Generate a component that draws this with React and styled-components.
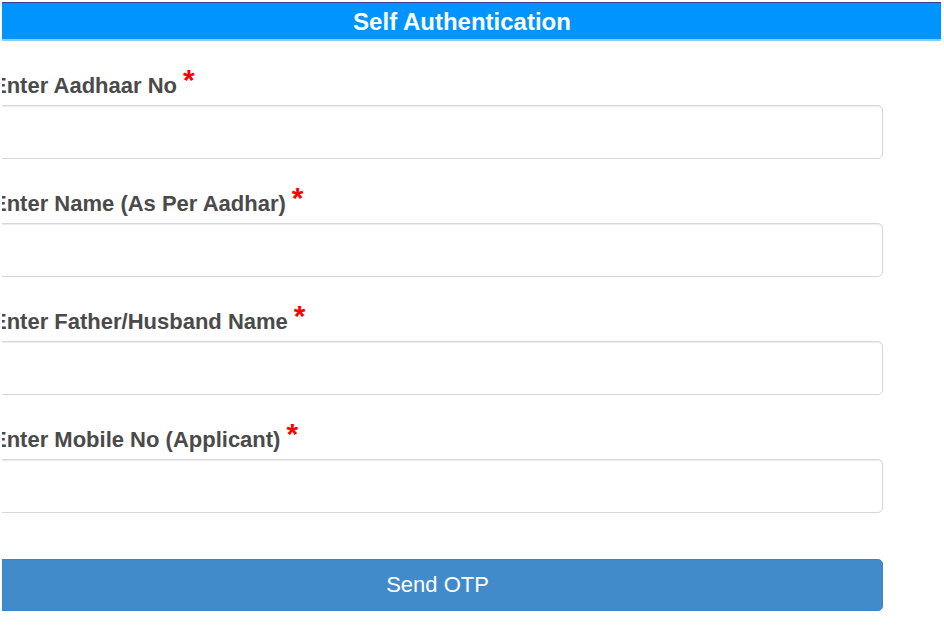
import React from 'react';
import styled, { createGlobalStyle } from 'styled-components';

const GlobalStyle = createGlobalStyle`
  html, body {
    margin: 0;
    padding: 0;
    background: #ffffff;
  }
  body {
    font-family: "Liberation Sans", Arial, sans-serif;
  }
`;

const Frame = styled.div`
  margin-left: 2px;
  width: 940px;
  overflow: hidden;
`;

const Panel = styled.div`
  margin-left: -19px;
  width: 958px;
`;

const Header = styled.div`
  box-sizing: border-box;
  margin-top: 2px;
  height: 39px;
  padding-top: 2px;
  border-top: 1px solid #3a3c8c;
  border-bottom: 2px solid #8ccdff;
  background: #0094ff;
  color: #ffffff;
  display: flex;
  align-items: center;
  justify-content: center;
  font-size: 24px;
  font-weight: bold;
`;

const Form = styled.form`
  width: 891px;
  padding: 30px 0 0 9px;
  display: flex;
  flex-direction: column;
`;

const Group = styled.div`
  display: flex;
  flex-direction: column;
  margin-bottom: 30px;
`;

const Label = styled.label`
  font-size: 22px;
  line-height: 26px;
  font-weight: bold;
  color: #4a4a4a;
  padding-top: 2px;
  margin-bottom: 6px;
  white-space: nowrap;
`;

const Required = styled.span`
  color: #ff0000;
  font-size: 30px;
  margin-left: 6px;
  vertical-align: 3px;
  line-height: 0;
`;

const Input = styled.input`
  box-sizing: border-box;
  width: 100%;
  height: 54px;
  border: 1px solid #d6d6d6;
  border-radius: 5px;
  box-shadow: inset 0 1px 1px rgba(0, 0, 0, 0.075);
  background: #ffffff;
  padding: 6px 12px;
  font-size: 20px;
  font-family: inherit;
  outline: none;
`;

const Button = styled.button`
  margin-top: 16px;
  width: 100%;
  height: 52px;
  border: 1px solid #3c84c4;
  border-radius: 5px;
  background: #428bca;
  color: #ffffff;
  font-family: "Liberation Sans", Arial, sans-serif;
  font-size: 22px;
  cursor: pointer;
`;

const fields = [
  'Enter Aadhaar No',
  'Enter Name (As Per Aadhar)',
  'Enter Father/Husband Name',
  'Enter Mobile No (Applicant)',
];

export default function App() {
  return (
    <>
      <GlobalStyle />
      <Frame>
        <Panel>
          <Header>Self Authentication</Header>
          <Form onSubmit={e => e.preventDefault()}>
            {fields.map(label => (
              <Group key={label}>
                <Label>
                  {label}
                  <Required>*</Required>
                </Label>
                <Input type="text" />
              </Group>
            ))}
            <Button type="submit">Send OTP</Button>
          </Form>
        </Panel>
      </Frame>
    </>
  );
}
